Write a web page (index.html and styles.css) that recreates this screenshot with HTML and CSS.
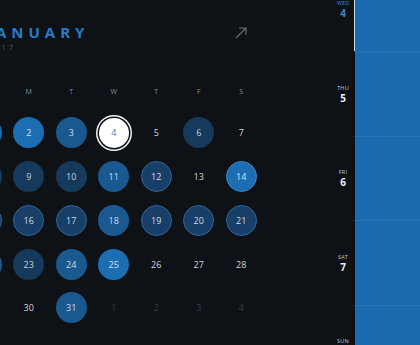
FILE: index.html
```html
<!DOCTYPE html>
<html>
<head>
<meta charset="utf-8">
<link rel="stylesheet" href="styles.css">
</head>
<body>
<div class="app">
  <div class="main">
    <div class="cal">
      <div class="head">
        <div class="titles">
          <div class="month">JANUARY</div>
          <div class="year">2017</div>
        </div>
        <svg class="expand" width="12" height="12" viewBox="0 0 12 12">
          <path d="M1 11 L11 1 M4 1 H11 V8" fill="none" stroke="#6b7179" stroke-width="1.1"/>
        </svg>
      </div>
      <div class="week">
        <span>S</span><span>M</span><span>T</span><span>W</span><span>T</span><span>F</span><span>S</span>
      </div>
      <div class="grid">
        <div class="c"><span class="n b">1</span></div>
        <div class="c"><span class="n b">2</span></div>
        <div class="c"><span class="n m">3</span></div>
        <div class="c"><span class="n today">4</span></div>
        <div class="c"><span class="n">5</span></div>
        <div class="c"><span class="n d">6</span></div>
        <div class="c"><span class="n">7</span></div>

        <div class="c"><span class="n d">8</span></div>
        <div class="c"><span class="n d">9</span></div>
        <div class="c"><span class="n d">10</span></div>
        <div class="c"><span class="n m">11</span></div>
        <div class="c"><span class="n o">12</span></div>
        <div class="c"><span class="n">13</span></div>
        <div class="c"><span class="n b bo">14</span></div>

        <div class="c"><span class="n o">15</span></div>
        <div class="c"><span class="n o">16</span></div>
        <div class="c"><span class="n o">17</span></div>
        <div class="c"><span class="n m">18</span></div>
        <div class="c"><span class="n o">19</span></div>
        <div class="c"><span class="n o">20</span></div>
        <div class="c"><span class="n o">21</span></div>

        <div class="c"><span class="n m">22</span></div>
        <div class="c"><span class="n d">23</span></div>
        <div class="c"><span class="n m">24</span></div>
        <div class="c"><span class="n b">25</span></div>
        <div class="c"><span class="n">26</span></div>
        <div class="c"><span class="n">27</span></div>
        <div class="c"><span class="n">28</span></div>

        <div class="c"><span class="n">29</span></div>
        <div class="c"><span class="n">30</span></div>
        <div class="c"><span class="n m">31</span></div>
        <div class="c"><span class="n dim">1</span></div>
        <div class="c"><span class="n dim">2</span></div>
        <div class="c"><span class="n dim">3</span></div>
        <div class="c"><span class="n dim">4</span></div>
      </div>
    </div>
  </div>
  <div class="days">
    <div class="day cur"><div class="dl">WED</div><div class="dn">4</div></div>
    <div class="day"><div class="dl">THU</div><div class="dn">5</div></div>
    <div class="day"><div class="dl">FRI</div><div class="dn">6</div></div>
    <div class="day"><div class="dl">SAT</div><div class="dn">7</div></div>
    <div class="day"><div class="dl">SUN</div><div class="dn">8</div></div>
  </div>
  <div class="blue">
    <div class="seg first"></div>
    <div class="seg"></div>
    <div class="seg"></div>
    <div class="seg"></div>
    <div class="seg"></div>
  </div>
</div>
</body>
</html>
```
FILE: styles.css
```css
* { box-sizing: border-box; }
html, body {
  margin: 0;
  padding: 0;
  background: #0e1116;
  width: 420px;
  height: 345px;
  overflow: hidden;
  font-family: "Open Sans", "Noto Sans", sans-serif;
}
.app {
  display: flex;
  width: 420px;
  height: 345px;
  overflow: hidden;
}
.main {
  flex: 0 0 332px;
  overflow: hidden;
}
.cal {
  width: 298px;
  margin-left: -35px;
}
.head {
  display: flex;
  justify-content: space-between;
  align-items: flex-start;
  padding: 25px 16px 0 21px;
  height: 86px;
}
.month {
  font-size: 15px;
  line-height: 15px;
  font-weight: 700;
  letter-spacing: 5px;
  color: #2a7cc4;
}
.year {
  margin-top: 3px;
  font-size: 8px;
  line-height: 8px;
  letter-spacing: 3px;
  color: #4b5560;
}
.expand {
  margin-top: 2px;
  display: block;
}
.week {
  display: grid;
  grid-template-columns: repeat(7, 42.5px);
  height: 12px;
  line-height: 12px;
  font-size: 7px;
  color: #8a9098;
  text-align: center;
  margin-bottom: 13px;
}
.grid {
  display: grid;
  grid-template-columns: repeat(7, 42.5px);
  grid-auto-rows: 43.75px;
}
.c {
  display: flex;
  align-items: center;
  justify-content: center;
}
.n {
  width: 31px;
  height: 31px;
  border-radius: 50%;
  display: flex;
  align-items: center;
  justify-content: center;
  font-size: 9px;
  color: #d2d6db;
}
.b { background: #1c6db1; color: #d6e4f2; }
.m { background: #1a5990; color: #cfdceb; }
.d { background: #153a5b; color: #c6d2de; }
.o { background: #173f67; border: 1px solid #2d689c; color: #cfdbe8; }
.bo { border: 1px solid #3b86c6; }
.today {
  width: 30px;
  height: 30px;
  background: #ffffff;
  color: #3f86cc;
  box-shadow: 0 0 0 1.5px #0e1116, 0 0 0 3px #f2f3f4;
}
.dim { color: #3a3f46; }
.days {
  flex: 0 0 22px;
  display: flex;
  flex-direction: column;
  text-align: center;
}
.day {
  flex: 0 0 84.5px;
}
.dl {
  font-size: 5.5px;
  line-height: 7px;
  color: #c2c7cc;
  letter-spacing: 0.2px;
}
.dn {
  margin-top: 1px;
  font-size: 10px;
  line-height: 11px;
  font-weight: 700;
  color: #eceef0;
}
.cur .dl, .cur .dn { color: #3a8ad2; }
.blue {
  flex: 0 0 66px;
  display: flex;
  flex-direction: column;
}
.seg {
  flex: 0 0 84.5px;
  background: #1a6bae;
  border-left: 1px solid #0e1116;
  border-top: 1px solid #2273b6;
}
.seg.first {
  flex: 0 0 51px;
  border-top: 0;
  border-left: 1px solid #d6dbe0;
}
```
